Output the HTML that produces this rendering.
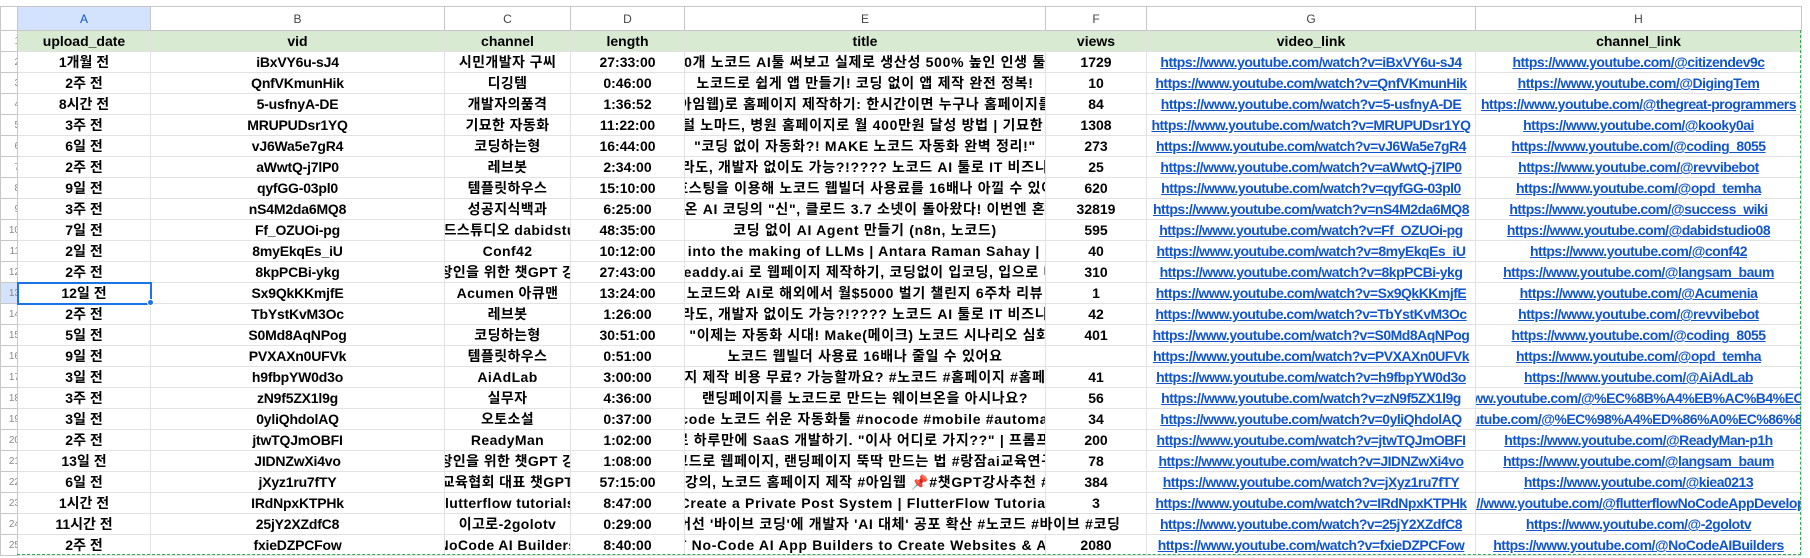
<!DOCTYPE html>
<html><head><meta charset="utf-8"><style>
*{margin:0;padding:0;box-sizing:border-box}
body{width:1810px;height:558px;overflow:hidden;background:#fff;font-family:"Liberation Sans","Noto Sans CJK KR",sans-serif;position:relative}
table{position:absolute;left:0;top:6px;border-collapse:collapse;table-layout:fixed;width:1801px}
td{border:1px solid #e2e2e2;height:21px;padding:0;font-size:14px;font-weight:bold;color:#000;overflow:hidden}
td>div{display:flex;justify-content:center;align-items:center;white-space:nowrap;overflow:hidden;height:20px;padding:0 2px}
td:nth-child(3)>div{letter-spacing:-.2px}
td:nth-child(4)>div{letter-spacing:.4px}
td:nth-child(6)>div{letter-spacing:.7px}
td:nth-child(8)>div,td:nth-child(9)>div{letter-spacing:-.5px}
tr.hd td{height:24px;font-weight:normal;font-size:12px;color:#444;border-color:#c7c7c7;background:#fff;letter-spacing:0}
tr.hd td>div{letter-spacing:0}
tr.g td{background:#d9ead3}
tr.g td>div{letter-spacing:0}
td.rn{font-size:10px;font-weight:normal;color:#888;border-color:#c7c7c7;background:#fff}
td.rn div{justify-content:flex-end;padding:0;margin-right:-3px}
a{color:#1155cc;text-decoration:underline}
.sel{outline:2px solid #1a73e8;outline-offset:-1px;position:relative}
.dot{position:absolute;left:147px;top:299px;width:7px;height:7px;border-radius:50%;background:#1a73e8;border:1px solid #fff}
.mq1{position:absolute;left:17px;top:554px;width:1784px;border-top:1px dashed #34a853}
.mq2{position:absolute;left:1800px;top:30px;height:525px;border-left:1px dashed #34a853}
</style></head><body>
<table>
<colgroup><col style="width:17px"><col style="width:133px"><col style="width:294px"><col style="width:126px"><col style="width:114px"><col style="width:361px"><col style="width:101px"><col style="width:329px"><col style="width:326px"></colgroup>
<tr class="hd"><td class="rn"><div></div></td><td style="background:#d3e3fd;color:#0b57d0"><div>A</div></td><td><div>B</div></td><td><div>C</div></td><td><div>D</div></td><td><div>E</div></td><td><div>F</div></td><td><div>G</div></td><td><div>H</div></td></tr>
<tr class="g"><td class="rn" style="background:#fff"><div>1</div></td><td><div>upload_date</div></td><td><div>vid</div></td><td><div>channel</div></td><td><div>length</div></td><td><div>title</div></td><td><div>views</div></td><td><div>video_link</div></td><td><div>channel_link</div></td></tr>
<tr><td class="rn"><div>2</div></td><td><div>1개월 전</div></td><td><div>iBxVY6u-sJ4</div></td><td><div>시민개발자 구씨</div></td><td><div>27:33:00</div></td><td><div>제가 100개 노코드 AI툴 써보고 실제로 생산성 500% 높인 인생 툴 12가지</div></td><td><div>1729</div></td><td><div><a>https://www.youtube.com/watch?v=iBxVY6u-sJ4</a></div></td><td><div><a>https://www.youtube.com/@citizendev9c</a></div></td></tr>
<tr><td class="rn"><div>3</div></td><td><div>2주 전</div></td><td><div>QnfVKmunHik</div></td><td><div>디깅템</div></td><td><div>0:46:00</div></td><td><div>노코드로 쉽게 앱 만들기! 코딩 없이 앱 제작 완전 정복!</div></td><td><div>10</div></td><td><div><a>https://www.youtube.com/watch?v=QnfVKmunHik</a></div></td><td><div><a>https://www.youtube.com/@DigingTem</a></div></td></tr>
<tr><td class="rn"><div>4</div></td><td><div>8시간 전</div></td><td><div>5-usfnyA-DE</div></td><td><div>개발자의품격</div></td><td><div>1:36:52</div></td><td><div>아임웹(아임웹)로 홈페이지 제작하기: 한시간이면 누구나 홈페이지를 만들어</div></td><td><div>84</div></td><td><div><a>https://www.youtube.com/watch?v=5-usfnyA-DE</a></div></td><td><div><a>https://www.youtube.com/@thegreat-programmers</a></div></td></tr>
<tr><td class="rn"><div>5</div></td><td><div>3주 전</div></td><td><div>MRUPUDsr1YQ</div></td><td><div>기묘한 자동화</div></td><td><div>11:22:00</div></td><td><div>디지털 노마드, 병원 홈페이지로 월 400만원 달성 방법 | 기묘한 자동</div></td><td><div>1308</div></td><td><div><a>https://www.youtube.com/watch?v=MRUPUDsr1YQ</a></div></td><td><div><a>https://www.youtube.com/@kooky0ai</a></div></td></tr>
<tr><td class="rn"><div>6</div></td><td><div>6일 전</div></td><td><div>vJ6Wa5e7gR4</div></td><td><div>코딩하는형</div></td><td><div>16:44:00</div></td><td><div>"코딩 없이 자동화?! MAKE 노코드 자동화 완벽 정리!"</div></td><td><div>273</div></td><td><div><a>https://www.youtube.com/watch?v=vJ6Wa5e7gR4</a></div></td><td><div><a>https://www.youtube.com/@coding_8055</a></div></td></tr>
<tr><td class="rn"><div>7</div></td><td><div>2주 전</div></td><td><div>aWwtQ-j7lP0</div></td><td><div>레브봇</div></td><td><div>2:34:00</div></td><td><div>코딩 몰라도, 개발자 없이도 가능?!???? 노코드 AI 툴로 IT 비즈니스 시작</div></td><td><div>25</div></td><td><div><a>https://www.youtube.com/watch?v=aWwtQ-j7lP0</a></div></td><td><div><a>https://www.youtube.com/@revvibebot</a></div></td></tr>
<tr><td class="rn"><div>8</div></td><td><div>9일 전</div></td><td><div>qyfGG-03pl0</div></td><td><div>템플릿하우스</div></td><td><div>15:10:00</div></td><td><div>웹호스팅을 이용해 노코드 웹빌더 사용료를 16배나 아낄 수 있어요</div></td><td><div>620</div></td><td><div><a>https://www.youtube.com/watch?v=qyfGG-03pl0</a></div></td><td><div><a>https://www.youtube.com/@opd_temha</a></div></td></tr>
<tr><td class="rn"><div>9</div></td><td><div>3주 전</div></td><td><div>nS4M2da6MQ8</div></td><td><div>성공지식백과</div></td><td><div>6:25:00</div></td><td><div>돌아온 AI 코딩의 "신", 클로드 3.7 소넷이 돌아왔다! 이번엔 혼자서</div></td><td><div>32819</div></td><td><div><a>https://www.youtube.com/watch?v=nS4M2da6MQ8</a></div></td><td><div><a>https://www.youtube.com/@success_wiki</a></div></td></tr>
<tr><td class="rn"><div>10</div></td><td><div>7일 전</div></td><td><div>Ff_OZUOi-pg</div></td><td><div>다비드스튜디오 dabidstudio</div></td><td><div>48:35:00</div></td><td><div>코딩 없이 AI Agent 만들기 (n8n, 노코드)</div></td><td><div>595</div></td><td><div><a>https://www.youtube.com/watch?v=Ff_OZUOi-pg</a></div></td><td><div><a>https://www.youtube.com/@dabidstudio08</a></div></td></tr>
<tr><td class="rn"><div>11</div></td><td><div>2일 전</div></td><td><div>8myEkqEs_iU</div></td><td><div>Conf42</div></td><td><div>10:12:00</div></td><td><div>Deep dive into the making of LLMs | Antara Raman Sahay | Conf42 LL</div></td><td><div>40</div></td><td><div><a>https://www.youtube.com/watch?v=8myEkqEs_iU</a></div></td><td><div><a>https://www.youtube.com/@conf42</a></div></td></tr>
<tr><td class="rn"><div>12</div></td><td><div>2주 전</div></td><td><div>8kpPCBi-ykg</div></td><td><div>직장인을 위한 챗GPT 강사</div></td><td><div>27:43:00</div></td><td><div>Readdy.ai 로 웹페이지 제작하기, 코딩없이 입코딩, 입으로 대</div></td><td><div>310</div></td><td><div><a>https://www.youtube.com/watch?v=8kpPCBi-ykg</a></div></td><td><div><a>https://www.youtube.com/@langsam_baum</a></div></td></tr>
<tr><td class="rn" style="background:#d3e3fd"><div>13</div></td><td class="sel"><div>12일 전</div></td><td><div>Sx9QkKKmjfE</div></td><td><div>Acumen 아큐맨</div></td><td><div>13:24:00</div></td><td><div>노코드와 AI로 해외에서 월$5000 벌기 챌린지 6주차 리뷰</div></td><td><div>1</div></td><td><div><a>https://www.youtube.com/watch?v=Sx9QkKKmjfE</a></div></td><td><div><a>https://www.youtube.com/@Acumenia</a></div></td></tr>
<tr><td class="rn"><div>14</div></td><td><div>2주 전</div></td><td><div>TbYstKvM3Oc</div></td><td><div>레브봇</div></td><td><div>1:26:00</div></td><td><div>코딩 몰라도, 개발자 없이도 가능?!???? 노코드 AI 툴로 IT 비즈니스 시작</div></td><td><div>42</div></td><td><div><a>https://www.youtube.com/watch?v=TbYstKvM3Oc</a></div></td><td><div><a>https://www.youtube.com/@revvibebot</a></div></td></tr>
<tr><td class="rn"><div>15</div></td><td><div>5일 전</div></td><td><div>S0Md8AqNPog</div></td><td><div>코딩하는형</div></td><td><div>30:51:00</div></td><td><div>🎬 "이제는 자동화 시대! Make(메이크) 노코드 시나리오 심화편</div></td><td><div>401</div></td><td><div><a>https://www.youtube.com/watch?v=S0Md8AqNPog</a></div></td><td><div><a>https://www.youtube.com/@coding_8055</a></div></td></tr>
<tr><td class="rn"><div>16</div></td><td><div>9일 전</div></td><td><div>PVXAXn0UFVk</div></td><td><div>템플릿하우스</div></td><td><div>0:51:00</div></td><td><div>노코드 웹빌더 사용료 16배나 줄일 수 있어요</div></td><td><div></div></td><td><div><a>https://www.youtube.com/watch?v=PVXAXn0UFVk</a></div></td><td><div><a>https://www.youtube.com/@opd_temha</a></div></td></tr>
<tr><td class="rn"><div>17</div></td><td><div>3일 전</div></td><td><div>h9fbpYW0d3o</div></td><td><div>AiAdLab</div></td><td><div>3:00:00</div></td><td><div>홈페이지 제작 비용 무료? 가능할까요? #노코드 #홈페이지 #홈페이지제</div></td><td><div>41</div></td><td><div><a>https://www.youtube.com/watch?v=h9fbpYW0d3o</a></div></td><td><div><a>https://www.youtube.com/@AiAdLab</a></div></td></tr>
<tr><td class="rn"><div>18</div></td><td><div>3주 전</div></td><td><div>zN9f5ZX1l9g</div></td><td><div>실무자</div></td><td><div>4:36:00</div></td><td><div>랜딩페이지를 노코드로 만드는 웨이브온을 아시나요?</div></td><td><div>56</div></td><td><div><a>https://www.youtube.com/watch?v=zN9f5ZX1l9g</a></div></td><td><div><a>https://www.youtube.com/@%EC%8B%A4%EB%AC%B4%EC%9E%90</a></div></td></tr>
<tr><td class="rn"><div>19</div></td><td><div>3일 전</div></td><td><div>0yliQhdolAQ</div></td><td><div>오토소설</div></td><td><div>0:37:00</div></td><td><div>#nocode 노코드 쉬운 자동화툴 #nocode #mobile #automation</div></td><td><div>34</div></td><td><div><a>https://www.youtube.com/watch?v=0yliQhdolAQ</a></div></td><td><div><a>https://www.youtube.com/@%EC%98%A4%ED%86%A0%EC%86%8C%EC%84%A4</a></div></td></tr>
<tr><td class="rn"><div>20</div></td><td><div>2주 전</div></td><td><div>jtwTQJmOBFI</div></td><td><div>ReadyMan</div></td><td><div>1:02:00</div></td><td><div>커서로 하루만에 SaaS 개발하기. "이사 어디로 가지??" | 프롬프트 완</div></td><td><div>200</div></td><td><div><a>https://www.youtube.com/watch?v=jtwTQJmOBFI</a></div></td><td><div><a>https://www.youtube.com/@ReadyMan-p1h</a></div></td></tr>
<tr><td class="rn"><div>21</div></td><td><div>13일 전</div></td><td><div>JIDNZwXi4vo</div></td><td><div>직장인을 위한 챗GPT 강사</div></td><td><div>1:08:00</div></td><td><div>노코드로 웹페이지, 랜딩페이지 뚝딱 만드는 법 #랑잠ai교육연구원</div></td><td><div>78</div></td><td><div><a>https://www.youtube.com/watch?v=JIDNZwXi4vo</a></div></td><td><div><a>https://www.youtube.com/@langsam_baum</a></div></td></tr>
<tr><td class="rn"><div>22</div></td><td><div>6일 전</div></td><td><div>jXyz1ru7fTY</div></td><td><div>한국교육협회 대표 챗GPT강사</div></td><td><div>57:15:00</div></td><td><div>아임웹 강의, 노코드 홈페이지 제작 #아임웹 📌#챗GPT강사추천 #한국교</div></td><td><div>384</div></td><td><div><a>https://www.youtube.com/watch?v=jXyz1ru7fTY</a></div></td><td><div><a>https://www.youtube.com/@kiea0213</a></div></td></tr>
<tr><td class="rn"><div>23</div></td><td><div>1시간 전</div></td><td><div>IRdNpxKTPHk</div></td><td><div>flutterflow tutorials</div></td><td><div>8:47:00</div></td><td><div>Create a Private Post System | FlutterFlow Tutorial</div></td><td><div>3</div></td><td><div><a>https://www.youtube.com/watch?v=IRdNpxKTPHk</a></div></td><td><div><a>https://www.youtube.com/@flutterflowNoCodeAppDevelopment</a></div></td></tr>
<tr><td class="rn"><div>24</div></td><td><div>11시간 전</div></td><td><div>25jY2XZdfC8</div></td><td><div>이고로-2golotv</div></td><td><div>0:29:00</div></td><td colspan="2" style="position:relative"><div style="position:relative;left:-175px;width:720px;justify-content:center;letter-spacing:.7px">미국에서 어선 '바이브 코딩'에 개발자 'AI 대체' 공포 확산 #노코드 #바이브 #코딩</div></td><td><div style="letter-spacing:-.5px"><a>https://www.youtube.com/watch?v=25jY2XZdfC8</a></div></td><td><div style="letter-spacing:-.5px"><a>https://www.youtube.com/@-2golotv</a></div></td></tr>
<tr><td class="rn"><div>25</div></td><td><div>2주 전</div></td><td><div>fxieDZPCFow</div></td><td><div>NoCode AI Builders</div></td><td><div>8:40:00</div></td><td><div>TOP 5 BEST No-Code AI App Builders to Create Websites &amp; Apps in 2025</div></td><td><div>2080</div></td><td><div><a>https://www.youtube.com/watch?v=fxieDZPCFow</a></div></td><td><div><a>https://www.youtube.com/@NoCodeAIBuilders</a></div></td></tr>
</table>
<div class="dot"></div>
<div class="mq1"></div><div class="mq2"></div>
</body></html>
